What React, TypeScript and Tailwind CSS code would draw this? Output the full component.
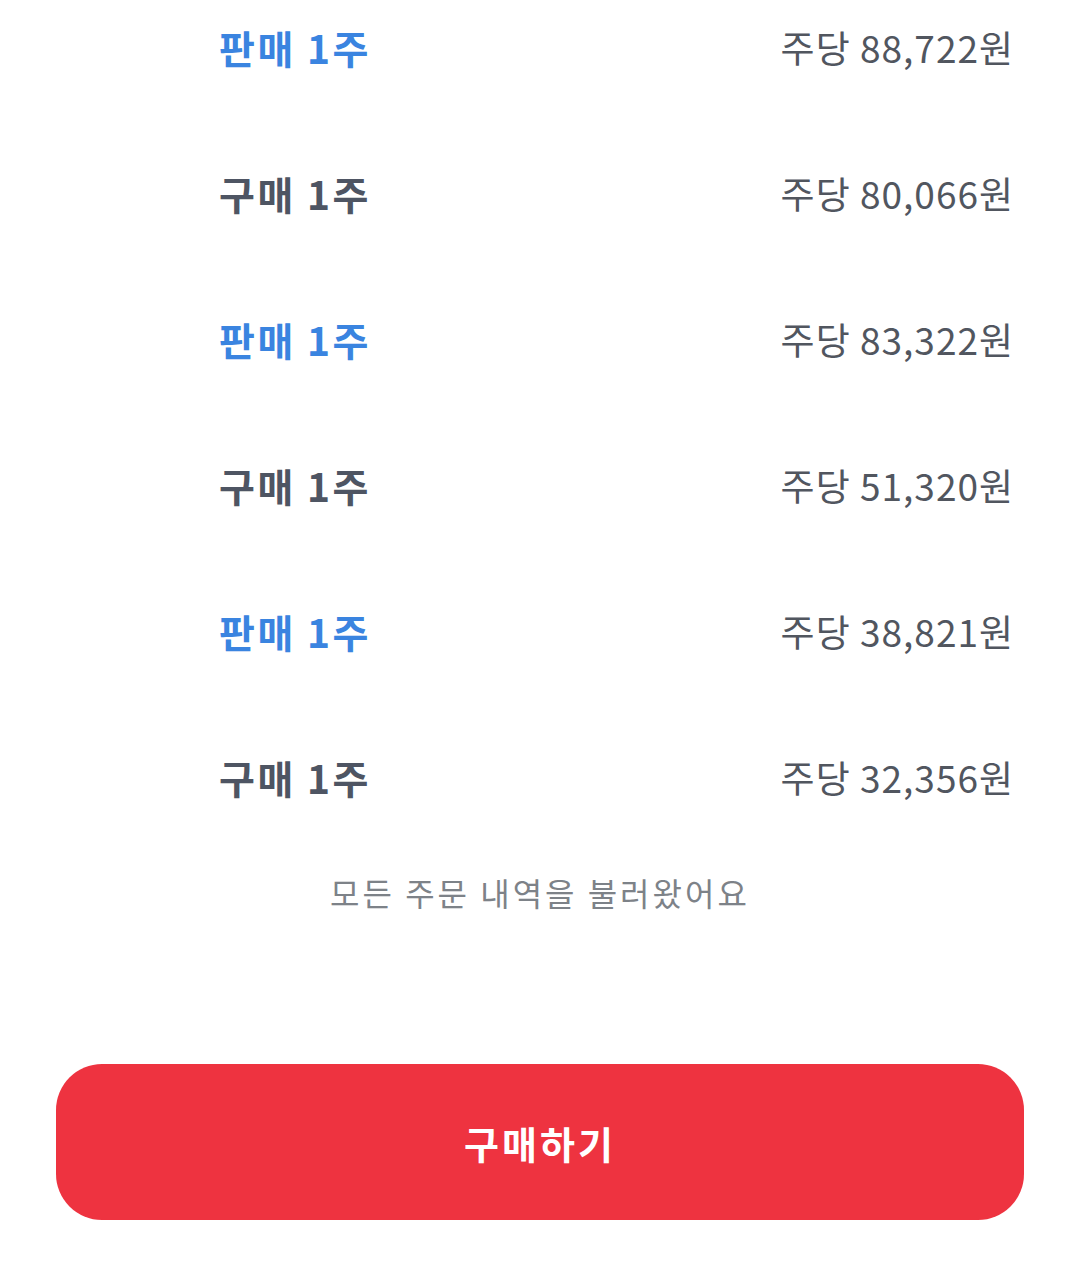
import React from "react";

const rows = [
  { type: "sell", price: "88,722" },
  { type: "buy", price: "80,066" },
  { type: "sell", price: "83,322" },
  { type: "buy", price: "51,320" },
  { type: "sell", price: "38,821" },
  { type: "buy", price: "32,356" },
];

export default function App() {
  return (
    <div
      className="w-[1080px] h-[1266px] overflow-hidden bg-white flex flex-col"
      style={{ fontFamily: '"Noto Sans CJK KR", "Noto Sans", sans-serif' }}
    >
      <div className="flex flex-col mt-[-26px]">
        {rows.map((r, i) => (
          <div key={i} className="h-[146px] flex items-center justify-between pl-[219px] pr-[66px]">
            <span
              className={`text-[39px] font-bold leading-none tracking-[2.5px] ${
                r.type === "sell" ? "text-[#3a84e0]" : "text-[#4e5563]"
              }`}
            >
              {r.type === "sell" ? "판매 1주" : "구매 1주"}
            </span>
            <span className="text-[37px] leading-none tracking-[1px] text-[#51565f]">주당 {r.price}원</span>
          </div>
        ))}
      </div>
      <div className="h-[84px] flex items-center justify-center text-[32px] tracking-[3px] text-[#7d8288]">
        모든 주문 내역을 불러왔어요
      </div>
      <div className="flex-1" />
      <div className="px-[56px] pb-[46px]">
        <button className="w-full h-[156px] rounded-[46px] bg-[#ee3340] text-white text-[38px] font-bold tracking-[3px] flex items-center justify-center">
          구매하기
        </button>
      </div>
    </div>
  );
}
